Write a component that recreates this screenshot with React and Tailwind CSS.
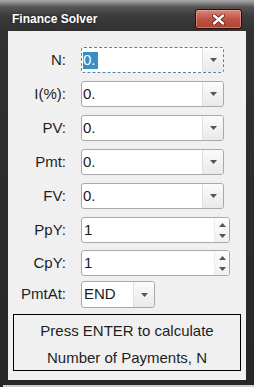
import React from "react";

const font = { fontFamily: '"Liberation Sans", Arial, sans-serif' };

function DownArrow() {
  return (
    <svg width="7" height="4" viewBox="0 0 7 4">
      <polygon points="0,0 7,0 3.5,4" fill="#555555" />
    </svg>
  );
}

function UpArrow() {
  return (
    <svg width="7" height="4" viewBox="0 0 7 4">
      <polygon points="0,4 7,4 3.5,0" fill="#555555" />
    </svg>
  );
}

function DropButton() {
  return (
    <div className="flex h-full w-[21px] items-center justify-center border-l border-[#e0e0e0] bg-gradient-to-b from-[#fbfbfb] to-[#e9e9e9]">
      <DownArrow />
    </div>
  );
}

function DropField({ children, focused }) {
  return (
    <div
      className={
        focused
          ? "flex h-[26px] w-[143px] items-stretch overflow-hidden rounded-[3px] border border-dashed border-[#4f86a8] bg-white"
          : "flex h-[26px] w-[143px] items-stretch overflow-hidden rounded-[3px] border border-[#a9a9a9] bg-white"
      }
    >
      <div className="flex flex-1 items-center pl-[1px] text-[15px] text-[#1a1a1a]">
        {children}
      </div>
      <DropButton />
    </div>
  );
}

function SpinField({ value }) {
  return (
    <div className="flex h-[26px] w-[149px] items-stretch overflow-hidden rounded-[3px] border border-[#a9a9a9] bg-white">
      <div className="flex flex-1 items-center pl-[2px] text-[15px] text-[#1a1a1a]">
        {value}
      </div>
      <div className="flex w-[15px] flex-col border-l border-[#ececec] bg-gradient-to-b from-[#fdfdfd] to-[#f0f0f0]">
        <div className="flex flex-1 items-center justify-center pt-[1px]">
          <UpArrow />
        </div>
        <div className="flex flex-1 items-center justify-center pb-[1px]">
          <DownArrow />
        </div>
      </div>
    </div>
  );
}

function Label({ children, className }) {
  return (
    <div className={"flex items-center justify-end text-[15px] text-[#1e1e1e] " + (className || "")}>
      {children}
    </div>
  );
}

export default function App() {
  return (
    <div
      style={font}
      className="relative flex h-[387px] w-[254px] flex-col overflow-hidden bg-[linear-gradient(to_bottom,#a8a8a8_0px,#8a8a8a_3px,#555555_7px,#3c3c3c_16px,#313131_31px,#272727_100%)]"
    >
      {/* title bar */}
      <div className="flex h-[31px] items-center justify-between pl-[12px] pr-[12px]">
        <span className="mt-[7px] text-[12px] font-bold text-white [text-shadow:0_0_3px_rgba(0,0,0,0.6)]">
          Finance Solver
        </span>
        <div className="mt-[7px] flex h-[20px] w-[47px] items-center justify-center rounded-[3px] border border-[#2a0c08] bg-gradient-to-b from-[#d9897b] via-[#c05244] to-[#b0432f] shadow-[inset_0_0_0_1px_rgba(255,200,190,0.4)]">
          <svg width="13" height="11" viewBox="0 0 13 11">
            <path d="M2 1.5 L11 9.5 M11 1.5 L2 9.5" stroke="#5a1a12" strokeWidth="4" strokeLinecap="round" />
            <path d="M2 1.5 L11 9.5 M11 1.5 L2 9.5" stroke="#ffffff" strokeWidth="2.4" strokeLinecap="round" />
          </svg>
        </div>
      </div>

      {/* content */}
      <div className="mx-[8px] flex h-[349px] flex-col bg-[#f0f0f0]">
        <div className="mt-[16px] grid grid-cols-[58px_1fr] gap-x-[15px] gap-y-[8px]">
          <Label>N:</Label>
          <DropField focused>
            <span className="flex h-[17px] items-center bg-[#3690c6] pr-[2px] text-white">0.</span>
          </DropField>

          <Label>I(%):</Label>
          <DropField>0.</DropField>

          <Label>PV:</Label>
          <DropField>0.</DropField>

          <Label>Pmt:</Label>
          <DropField>0.</DropField>

          <Label>FV:</Label>
          <DropField>0.</DropField>

          <Label>PpY:</Label>
          <SpinField value="1" />

          <Label className="-mt-[1px]">CpY:</Label>
          <div className="-mt-[1px]">
            <SpinField value="1" />
          </div>

          <Label className="-mt-[3px]">PmtAt:</Label>
          <div className="-mt-[3px] flex h-[27px] w-[74px] items-stretch overflow-hidden rounded-[3px] border border-[#a9a9a9] bg-white">
            <div className="flex flex-1 items-center pl-[2px] text-[15px] text-[#1a1a1a]">END</div>
            <DropButton />
          </div>
        </div>

        <div className="mx-[5px] mt-[6px] flex h-[57px] flex-col items-center border border-black pt-[2px] text-[15px] text-[#1e1e1e]">
          <div className="leading-[27px]">Press ENTER to calculate</div>
          <div className="leading-[27px]">Number of Payments, N</div>
        </div>
      </div>

      <div className="flex-1" />
      <div className="ml-[3px] h-[2px] bg-[#cfcfcf]" />
    </div>
  );
}
